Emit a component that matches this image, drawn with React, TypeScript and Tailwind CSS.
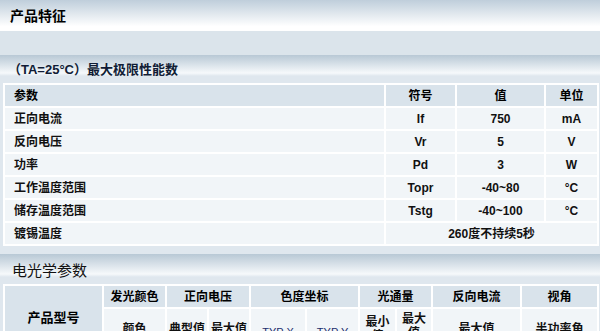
const font = { fontFamily: '"Liberation Sans", "Noto Sans CJK SC", sans-serif' };

const limits = [
  { name: "正向电流", sym: "If", val: "750", unit: "mA" },
  { name: "反向电压", sym: "Vr", val: "5", unit: "V" },
  { name: "功率", sym: "Pd", val: "3", unit: "W" },
  { name: "工作温度范围", sym: "Topr", val: "-40~80", unit: "°C" },
  { name: "储存温度范围", sym: "Tstg", val: "-40~100", unit: "°C" },
];

const head = "bg-[#d9e3eb] font-bold text-center text-[12px] text-black p-0";
const cell = "bg-[#f1f5f8] font-bold text-center text-[12px] text-[#111] p-0";

export default function App() {
  return (
    <div className="w-[600px] h-[331px] overflow-hidden bg-white" style={font}>
      <div className="h-[31px] bg-[linear-gradient(#bfcedb,#ffffff_85%)] pl-[10px] pt-[4px]">
        <span className="text-[14px] font-bold text-black">产品特征</span>
      </div>
      <div className="h-[24px] bg-[#dbe4eb]" />
      <div className="h-[28px] bg-[linear-gradient(#b8c8d5_0px,#f6f9fb_18px,#dfe7ee_21px)] pl-[8px] pt-[5px] leading-[18px]">
        <span className="text-[13px] font-bold text-[#101c35]">（TA=25°C）最大极限性能数</span>
      </div>
      <div className="bg-[#dfe7ee] pl-[3px] pr-[1px]">
        <table className="w-full table-fixed border-separate border-spacing-[2px] bg-white">
          <colgroup>
            <col />
            <col className="w-[69px]" />
            <col className="w-[87px]" />
            <col className="w-[51px]" />
          </colgroup>
          <tbody>
            <tr className="h-[21px]">
              <td className={head + " text-left pl-[9px]"}>参数</td>
              <td className={head}>符号</td>
              <td className={head}>值</td>
              <td className={head}>单位</td>
            </tr>
            {limits.map((r) => (
              <tr key={r.sym} className="h-[21px]">
                <td className={cell + " text-left pl-[9px]"}>{r.name}</td>
                <td className={cell}>{r.sym}</td>
                <td className={cell}>{r.val}</td>
                <td className={cell}>{r.unit}</td>
              </tr>
            ))}
            <tr className="h-[21px]">
              <td className={cell + " text-left pl-[9px]"}>镀锡温度</td>
              <td className={cell} colSpan={3}>260度不持续5秒</td>
            </tr>
          </tbody>
        </table>
      </div>
      <div className="h-[8px] bg-[#dfe7ee]" />
      <div className="h-[30px] bg-[linear-gradient(#b8c8d5_0px,#f6f9fb_20px,#dfe7ee_23px)] pl-[12px] pt-[7px] leading-[20px]">
        <span className="text-[15px] text-[#111]">电光学参数</span>
      </div>
      <div className="bg-[#dfe7ee] pl-[3px] pr-[1px]">
        <table className="w-full table-fixed border-separate border-spacing-[2px] bg-white">
          <colgroup>
            <col className="w-[97px]" />
            <col className="w-[61px]" />
            <col className="w-[40px]" />
            <col className="w-[40px]" />
            <col className="w-[54px]" />
            <col className="w-[51px]" />
            <col className="w-[35px]" />
            <col className="w-[34px]" />
            <col className="w-[87px]" />
            <col />
          </colgroup>
          <tbody>
            <tr className="h-[21px]">
              <td rowSpan={2} className={head + " text-[13px]"}>产品型号</td>
              <td className={head}>发光颜色</td>
              <td className={head} colSpan={2}>正向电压</td>
              <td className={head} colSpan={2}>色度坐标</td>
              <td className={head} colSpan={2}>光通量</td>
              <td className={head}>反向电流</td>
              <td className={head}>视角</td>
            </tr>
            <tr className="h-[40px]">
              <td className={cell}>颜色</td>
              <td className={cell}>典型值</td>
              <td className={cell}>最大值</td>
              <td className="bg-[#f1f5f8] text-center text-[11px] text-[#1b2e6e] p-0 pt-[6px]">TYP X</td>
              <td className="bg-[#f1f5f8] text-center text-[11px] text-[#1b2e6e] p-0 pt-[6px]">TYP Y</td>
              <td className={cell + " leading-[14px] px-[5px]"}>最小值</td>
              <td className={cell + " leading-[14px] px-[3px] align-top pt-[3px]"}>最大值</td>
              <td className={cell}>最大值</td>
              <td className={cell}>半功率角</td>
            </tr>
          </tbody>
        </table>
      </div>
    </div>
  );
}
